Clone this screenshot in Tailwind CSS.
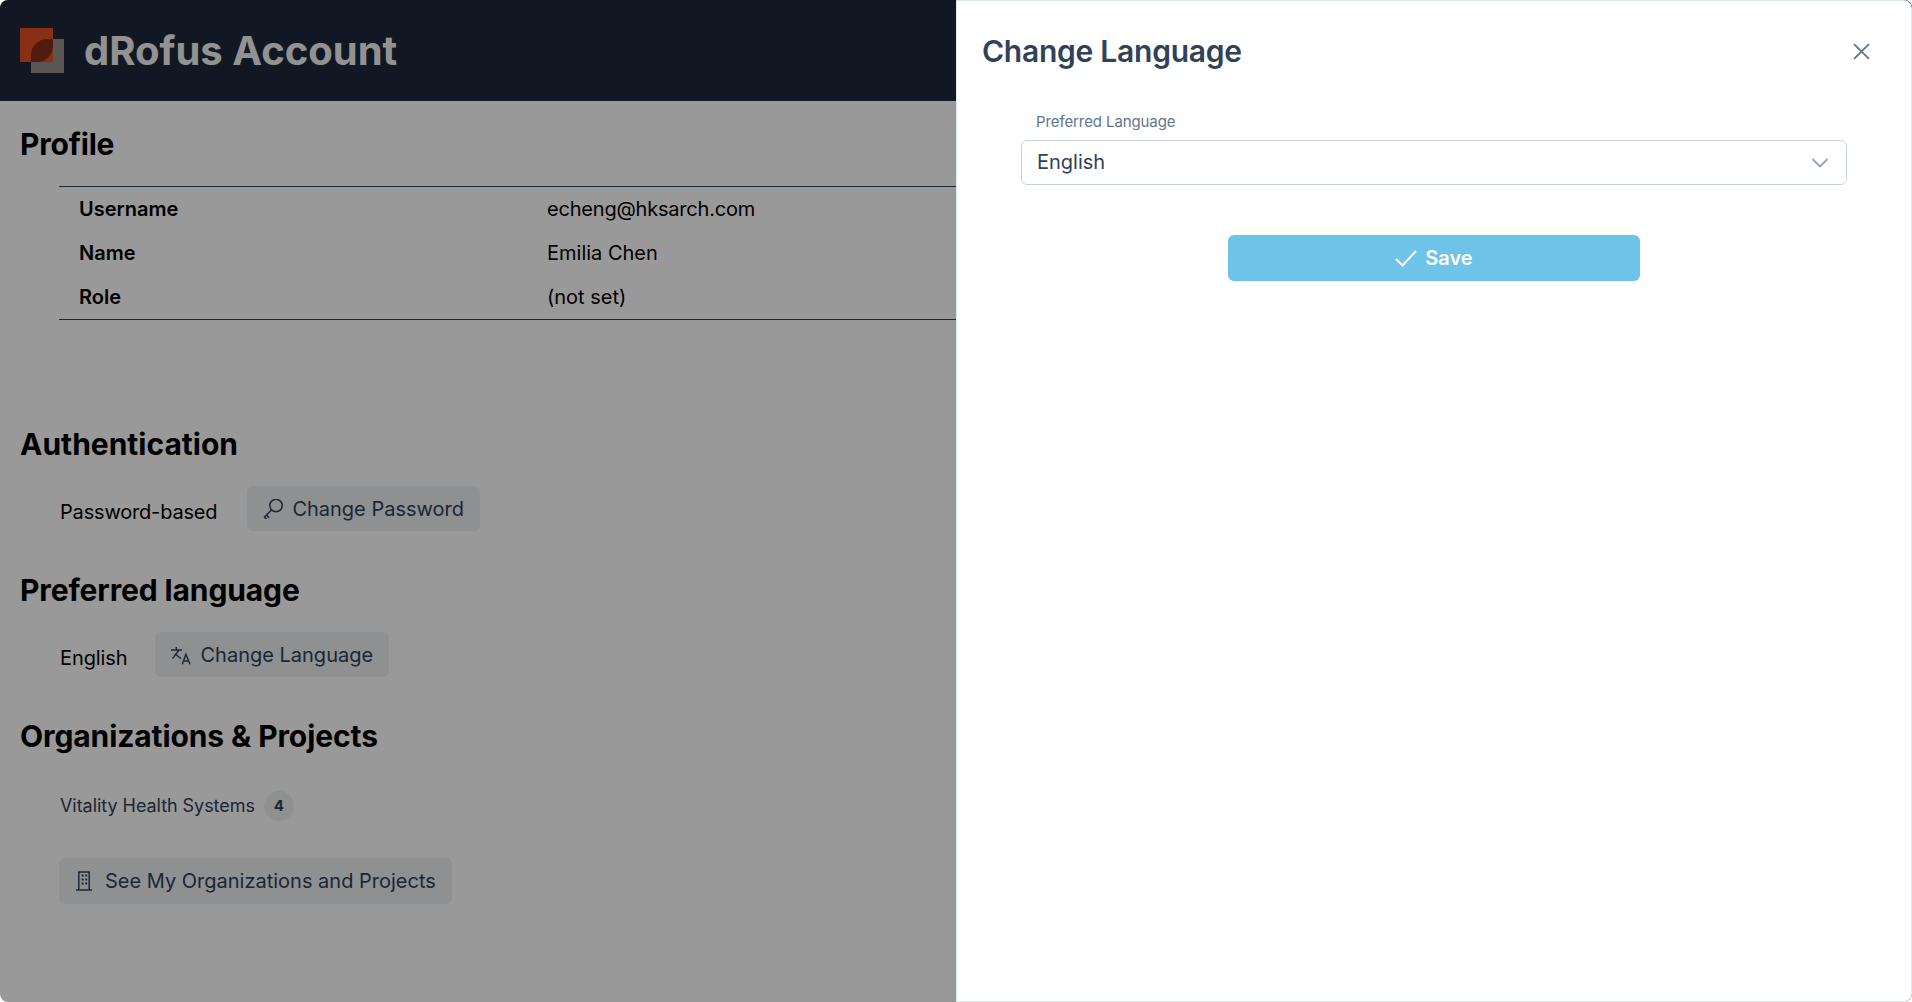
<!doctype html>
<html lang="en">
<head>
<meta charset="utf-8">
<title>dRofus Account</title>
<script src="https://cdn.jsdelivr.net/npm/@tailwindcss/browser@4"></script>
</head>
<body class="bg-white font-['Inter',sans-serif]">
<div class="relative h-[1002px] w-[1912px] overflow-hidden rounded-lg bg-white text-black">
  <header class="flex h-[101px] items-center gap-5 bg-slate-800 pl-5">
    <svg class="h-[46px] w-[44px] shrink-0" viewBox="0 0 44 46">
      <rect x="11" y="11" width="33" height="34" fill="#968f8b"/>
      <rect x="0" y="0" width="33" height="34" fill="#e54f26"/>
      <path d="M11 34V27A16 16 0 0 1 27 11H33V18A16 16 0 0 1 17 34Z" fill="#84301a"/>
    </svg>
    <h1 class="text-[40px] font-bold text-gray-100">dRofus Account</h1>
  </header>
  <main class="px-5">
    <section class="pt-[25px]">
      <h2 class="text-3xl leading-[36px] font-bold tracking-[-0.2px]">Profile</h2>
      <div class="mt-[24px] ml-[39px] w-[1820px] border-y border-slate-700">
        <div class="grid h-[44px] grid-cols-[488px_1fr] items-center text-xl"><span class="pl-[20px] font-semibold">Username</span><span class="tracking-[-0.2px]">echeng@hksarch.com</span></div>
        <div class="grid h-[44px] grid-cols-[488px_1fr] items-center text-xl"><span class="pl-[20px] font-semibold">Name</span><span>Emilia Chen</span></div>
        <div class="grid h-[44px] grid-cols-[488px_1fr] items-center text-xl"><span class="pl-[20px] font-semibold">Role</span><span>(not set)</span></div>
      </div>
    </section>
    <section class="pt-[106px]">
      <h2 class="text-3xl leading-[36px] font-bold">Authentication</h2>
      <div class="mt-[24px] ml-10 flex items-center gap-[30px]">
        <span class="pt-[7px] text-xl tracking-[-0.18px]">Password-based</span>
        <button class="flex h-[45px] items-center gap-[9px] rounded-md bg-[#edf0f4] px-4 text-xl text-slate-700">
          <svg class="h-5 w-5" viewBox="0 0 20 20" fill="none" stroke="currentColor" stroke-width="1.5"><circle cx="13" cy="6.5" r="6.2"/><path d="M8.5 11 1 18.5M3.5 16l2.7 2.7M1.4 18.1l2 2"/></svg>
          Change Password
        </button>
      </div>
    </section>
    <section class="pt-[41px]">
      <h2 class="text-3xl leading-[36px] font-bold tracking-[-0.12px]">Preferred language</h2>
      <div class="mt-[24px] ml-10 flex items-center gap-[28px]">
        <span class="pt-[7px] text-xl tracking-[-0.1px]">English</span>
        <button class="flex h-[45px] items-center gap-[9px] rounded-md bg-[#edf0f4] px-4 text-xl text-slate-700">
          <svg class="h-5 w-5" viewBox="0 0 20 20" fill="none" stroke="currentColor" stroke-width="1.4"><path d="M0 5H11M5.3 2V5M8 5 1.5 13.7M4 8.7 10 13.7M11.3 19.3 14.9 9.3 19 19.3M12.5 16H17.8"/></svg>
          Change Language
        </button>
      </div>
    </section>
    <section class="pt-[41px]">
      <h2 class="text-3xl leading-[36px] font-bold tracking-[-0.1px]">Organizations &amp; Projects</h2>
      <div class="mt-[37px] ml-10 flex items-center gap-[9px] text-lg text-slate-700">
        <span class="tracking-[-0.05px]">Vitality Health Systems</span>
        <span class="flex h-[30px] w-[30px] items-center justify-center rounded-full bg-[#edf0f4] text-[15px] font-bold">4</span>
      </div>
      <button class="mt-[37px] ml-[39px] flex h-[46px] items-center gap-3 rounded-md bg-[#edf0f4] px-4 text-xl text-slate-700">
        <svg class="h-5 w-[18px]" viewBox="0 0 18 20" fill="none" stroke="currentColor" stroke-width="1.5"><path d="M1 19H17M3.8 19V1H14.2V19"/><path d="M6.6 4.5h2M10.2 4.5h2M6.6 8.5h2M10.2 8.5h2M6.6 12.5h2M10.2 12.5h2" stroke-width="2.2"/></svg>
        See My Organizations and Projects
      </button>
    </section>
  </main>

  <div class="absolute inset-0 bg-black/40"></div>

  <aside class="absolute inset-y-0 right-0 flex w-[956px] flex-col rounded-r-lg border border-slate-200 bg-white">
    <div class="flex items-center justify-between pt-[32px] pr-[41px] pl-[25px]">
      <h2 class="text-3xl leading-[36px] font-semibold tracking-[-0.25px] text-slate-700">Change Language</h2>
      <svg class="h-[17px] w-[17px] text-slate-500" viewBox="0 0 16 16" fill="none" stroke="currentColor" stroke-width="1.7"><path d="M1 1 15 15M15 1 1 15"/></svg>
    </div>
    <div class="mt-[43px] mr-[64px] ml-[64px]">
      <label class="block pl-[15px] text-[15px] leading-[20px] tracking-[-0.1px] text-slate-500">Preferred Language</label>
      <div class="mt-[8px] flex h-[45px] items-center justify-between rounded-md border border-[#c7d3e5] pr-[17px] pl-[15px] text-xl text-slate-700">
        <span class="pb-px">English</span>
        <svg class="h-[10px] w-[18px] text-slate-400" viewBox="0 0 18 10" fill="none" stroke="currentColor" stroke-width="1.8"><path d="M1.5 1 9 8.5 16.5 1"/></svg>
      </div>
      <div class="mt-[50px] flex justify-center">
        <button class="flex h-[46px] w-[412px] items-center justify-center gap-2 rounded-md bg-[#6ec3e8] text-xl font-semibold text-white">
          <svg class="h-5 w-[22px]" viewBox="0 0 22 20" fill="none" stroke="currentColor" stroke-width="2"><path d="M1 11 7.5 17.5 21 3"/></svg>
          Save
        </button>
      </div>
    </div>
  </aside>
</div>
</body>
</html>
